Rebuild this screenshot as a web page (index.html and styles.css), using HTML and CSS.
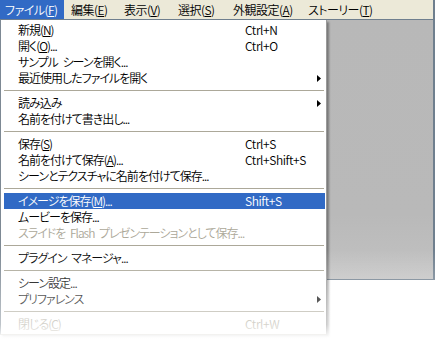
FILE: index.html
```html
<!DOCTYPE html>
<html lang="ja">
<head>
<meta charset="utf-8">
<link rel="stylesheet" href="styles.css">
</head>
<body>
<div class="screen">
  <div class="window">
    <div class="menubar">
      <span class="mb-item active">ファイル(<u>F</u>)</span>
      <span class="mb-item">編集(<u>E</u>)</span>
      <span class="mb-item">表示(<u>V</u>)</span>
      <span class="mb-item">選択(<u>S</u>)</span>
      <span class="mb-item">外観設定(<u>A</u>)</span>
      <span class="mb-item">ストーリー(<u>T</u>)</span>
    </div>
    <div class="client"></div>
  </div>

  <div class="dropdown">
    <div class="item"><span>新規(<u>N</u>)</span><span class="key">Ctrl+N</span></div>
    <div class="item"><span>開く(<u>O</u>)...</span><span class="key">Ctrl+O</span></div>
    <div class="item"><span>サンプル シーンを開く...</span><span></span></div>
    <div class="item"><span>最近使用したファイルを開く</span><span></span><svg class="arrow" viewBox="0 0 4 7" width="4" height="7"><path d="M0 0 L4 3.5 L0 7 Z" fill="#000"/></svg></div>
    <div class="sep"></div>
    <div class="item"><span>読み込み</span><span></span><svg class="arrow" viewBox="0 0 4 7" width="4" height="7"><path d="M0 0 L4 3.5 L0 7 Z" fill="#000"/></svg></div>
    <div class="item"><span>名前を付けて書き出し...</span><span></span></div>
    <div class="sep"></div>
    <div class="item"><span>保存(<u>S</u>)</span><span class="key">Ctrl+S</span></div>
    <div class="item"><span>名前を付けて保存(<u>A</u>)...</span><span class="key">Ctrl+Shift+S</span></div>
    <div class="item"><span>シーンとテクスチャに名前を付けて保存...</span><span></span></div>
    <div class="sep"></div>
    <div class="item selected"><span>イメージを保存(<u>M</u>)...</span><span class="key">Shift+S</span></div>
    <div class="item"><span>ムービーを保存...</span><span></span></div>
    <div class="item disabled"><span>スライドを Flash プレゼンテーションとして保存...</span><span></span></div>
    <div class="sep"></div>
    <div class="item"><span>プラグイン マネージャ...</span><span></span></div>
    <div class="sep"></div>
    <div class="item"><span>シーン設定...</span><span></span></div>
    <div class="item"><span>プリファレンス</span><span></span><svg class="arrow" viewBox="0 0 4 7" width="4" height="7"><path d="M0 0 L4 3.5 L0 7 Z" fill="#000"/></svg></div>
    <div class="sep"></div>
    <div class="item disabled"><span>閉じる(<u>C</u>)</span><span class="key">Ctrl+W</span></div>
  </div>

  <div class="fade"></div>
</div>
</body>
</html>
```

FILE: styles.css
```css
html, body {
  margin: 0;
  padding: 0;
  background: #ffffff;
}

body {
  font-family: "Noto Sans CJK JP", "Noto Sans", sans-serif;
  font-size: 12px;
  font-weight: 350;
  font-feature-settings: "palt";
  color: #000;
}

u {
  text-decoration: underline;
  text-underline-offset: 1px;
}

.screen {
  position: relative;
  width: 440px;
  height: 340px;
  overflow: hidden;
}

.window {
  width: 433px;
  border-right: 2px solid #6f7f8e;
}

.menubar {
  display: grid;
  grid-template-columns: 65px 53px 54px 55px 75px 70px;
  height: 19px;
  background: #ece9d8;
  border-bottom: 1px solid #6f7f8e;
  letter-spacing: -0.5px;
}

.mb-item {
  display: block;
  line-height: 19px;
  padding-left: 6px;
  white-space: nowrap;
}

.mb-item.active {
  background: #316ac5;
  color: #fff;
  padding-left: 5px;
  width: 64px;
  box-sizing: border-box;
}

.client {
  height: 259px;
  background: linear-gradient(#b8b8b8 0%, #b9b9b9 75%, #c2c2c2 100%);
  border-bottom: 1px solid #6f7f8e;
}

.dropdown {
  position: absolute;
  left: 0;
  top: 20px;
  width: 321px;
  padding: 2px 1px 2px 3px;
  background: #ffffff;
  border-left: 1px solid #7d8994;
  border-right: 1px solid #9a9a9a;
  border-bottom: 1px solid #aca899;
  box-shadow: 2px 2px 2px rgba(0, 0, 0, 0.35);
}

.item {
  display: grid;
  grid-template-columns: 227px 1fr auto;
  align-items: center;
  height: 16px;
  line-height: 16px;
  padding: 0 4px 0 14px;
  white-space: nowrap;
  letter-spacing: -1px;
  word-spacing: 3px;
}

.item .key {
  letter-spacing: -0.4px;
}

.item.selected {
  background: #316ac5;
  color: #fff;
}

.item.disabled {
  color: #aca899;
}

.arrow {
  display: block;
}

.sep {
  height: 1px;
  margin: 4px 1px 4px 0;
  background: #aca899;
}

.fade {
  position: absolute;
  left: 0;
  top: 250px;
  width: 440px;
  height: 90px;
  pointer-events: none;
  background: linear-gradient(
    rgba(255, 255, 255, 0) 0%,
    rgba(255, 255, 255, 0.2) 33%,
    rgba(255, 255, 255, 0.42) 67%,
    rgba(255, 255, 255, 0.5) 83%,
    rgba(255, 255, 255, 0.92) 96%,
    #ffffff 100%
  );
}
```
